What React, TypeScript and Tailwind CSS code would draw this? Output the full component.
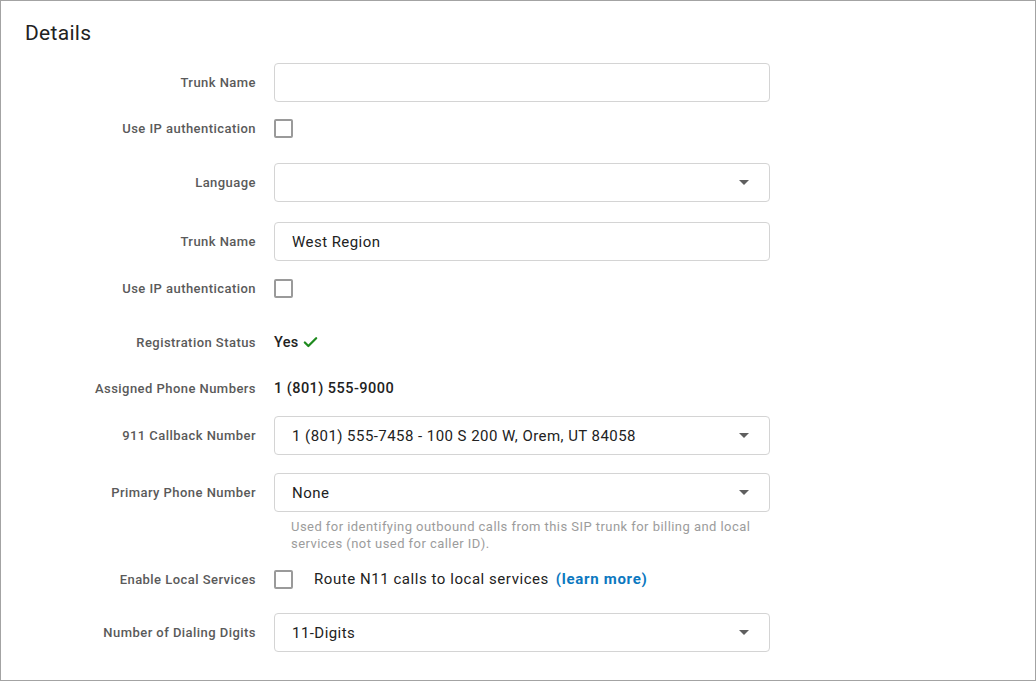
import { Check } from "lucide-react";
import type { ReactNode } from "react";

function Caret() {
  return (
    <span className="ml-auto mr-[20px] h-0 w-0 border-x-[5px] border-t-[5px] border-x-transparent border-t-[#5f5f5f]" />
  );
}

function Field({ value, select }: { value?: string; select?: boolean }) {
  return (
    <div className="flex h-[39px] w-[496px] items-center rounded-[4px] border border-[#d4d4d4] bg-white pl-[17px] text-[15px] tracking-[0.45px] text-[#222]">
      <span className="pt-px">{value}</span>
      {select && <Caret />}
    </div>
  );
}

function Box() {
  return <span className="block h-[19px] w-[19px] rounded-[2px] border-2 border-[#9a9a9a] bg-white" />;
}

function Row({ label, mt, children }: { label: string; mt: string; children: ReactNode }) {
  return (
    <div className={`flex items-start ${mt}`}>
      <div className="flex h-[39px] w-[255px] shrink-0 items-center justify-end text-right text-[13px] font-medium tracking-[0.45px] text-[#5a5a5a]">
        {label}
      </div>
      <div className="ml-[18px]">{children}</div>
    </div>
  );
}

export default function App() {
  return (
    <div
      className="h-[681px] w-[1036px] border border-[#a3a3a3] bg-white"
      style={{ fontFamily: "Roboto, 'Liberation Sans', sans-serif" }}
    >
      <h2 className="ml-[24px] mt-[18px] text-[21px] leading-[28px] tracking-[0.3px] text-[#222]">Details</h2>

      <Row label="Trunk Name" mt="mt-[16px]">
        <Field />
      </Row>
      <Row label="Use IP authentication" mt="mt-[7px]">
        <div className="flex h-[39px] items-center">
          <Box />
        </div>
      </Row>
      <Row label="Language" mt="mt-[15px]">
        <Field select />
      </Row>
      <Row label="Trunk Name" mt="mt-[20px]">
        <Field value="West Region" />
      </Row>
      <Row label="Use IP authentication" mt="mt-[8px]">
        <div className="flex h-[39px] items-center">
          <Box />
        </div>
      </Row>
      <Row label="Registration Status" mt="mt-[15px]">
        <div className="flex h-[39px] items-center gap-[3px] text-[14.5px] font-medium tracking-[0.3px] text-[#222]">
          Yes
          <Check size={17} strokeWidth={3.2} className="text-[#1e8a1e]" />
        </div>
      </Row>
      <Row label="Assigned Phone Numbers" mt="mt-[7px]">
        <div className="flex h-[39px] items-center text-[14.5px] font-medium tracking-[0.45px] text-[#222]">
          1 (801) 555-9000
        </div>
      </Row>
      <Row label="911 Callback Number" mt="mt-[8px]">
        <Field value="1 (801) 555-7458 - 100 S 200 W, Orem, UT 84058" select />
      </Row>
      <Row label="Primary Phone Number" mt="mt-[18px]">
        <Field value="None" select />
        <p className="mt-[6px] w-[490px] pl-[17px] text-[13px] leading-[17px] tracking-[0.45px] text-[#9c9c9c]">
          Used for identifying outbound calls from this SIP trunk for billing and local services (not
          used for caller ID).
        </p>
      </Row>
      <Row label="Enable Local Services" mt="mt-[8px]">
        <div className="flex h-[39px] items-center text-[15px] tracking-[0.55px] text-[#222]">
          <Box />
          <span className="ml-[21px]">Route N11 calls to local services</span>
          <a className="ml-[7px] font-bold tracking-[0.7px] text-[#0b78c0]">(learn more)</a>
        </div>
      </Row>
      <Row label="Number of Dialing Digits" mt="mt-[14px]">
        <Field value="11-Digits" select />
      </Row>
    </div>
  );
}
